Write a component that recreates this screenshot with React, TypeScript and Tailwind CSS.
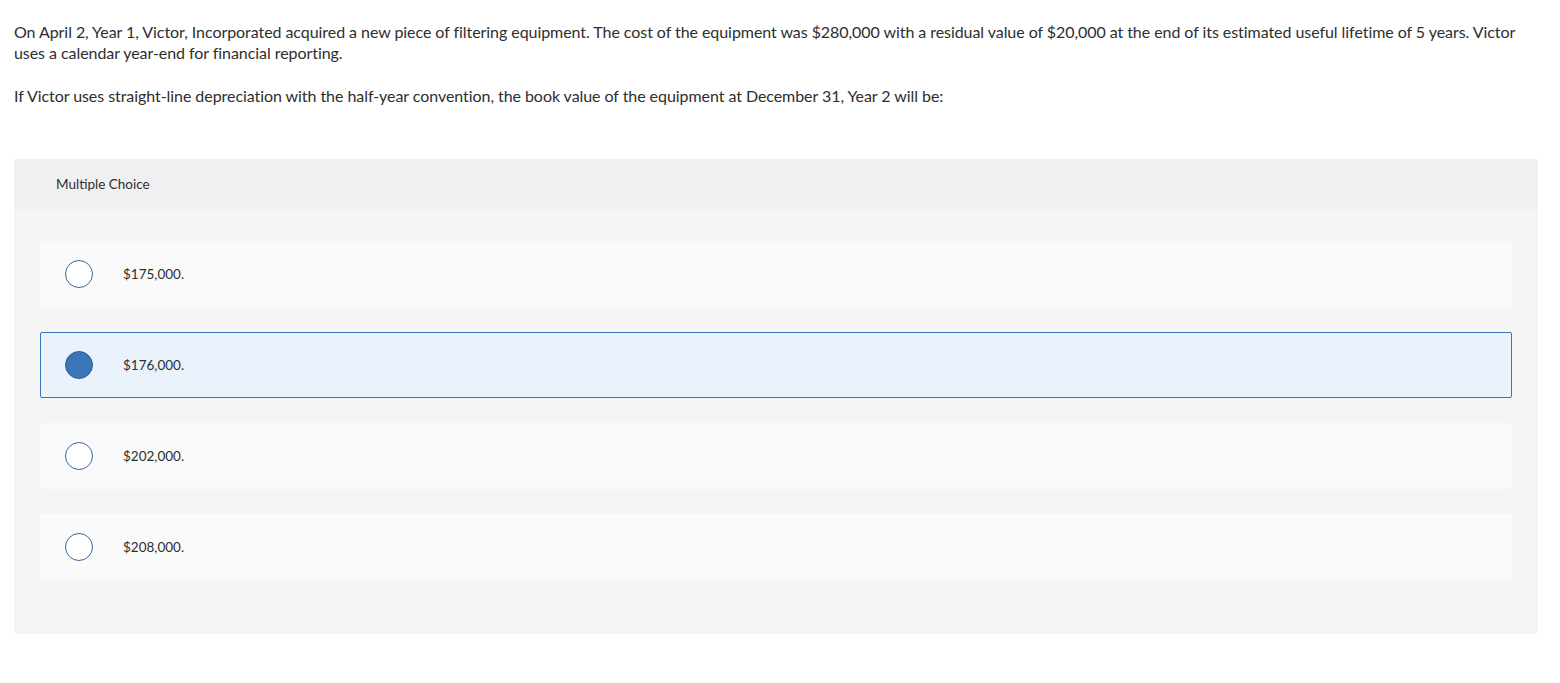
import React from "react";

const options = [
  { label: "$175,000.", selected: false },
  { label: "$176,000.", selected: true },
  { label: "$202,000.", selected: false },
  { label: "$208,000.", selected: false },
];

export default function App() {
  return (
    <div
      className="min-h-[683px] w-[1560px] bg-white text-[#2e2e2e]"
      style={{ fontFamily: "Lato, 'Open Sans', sans-serif" }}
    >
      <div className="px-[14px] pt-[21px]">
        <p className="text-[16px] leading-[21px] tracking-[-0.06px] w-[1525px]">
          On April 2, Year 1, Victor, Incorporated acquired a new piece of filtering equipment. The cost of the equipment was $280,000 with a residual value of $20,000 at the end of its estimated useful lifetime of 5 years. Victor uses a calendar year-end for financial reporting.
        </p>
        <p className="mt-[22px] text-[16px] leading-[21px] tracking-[-0.06px]">
          If Victor uses straight-line depreciation with the half-year convention, the book value of the equipment at December 31, Year 2 will be:
        </p>
      </div>
      <div className="mx-[14px] mt-[53px] w-[1524px] rounded-[3px] bg-[#f5f5f5] overflow-hidden">
        <div className="h-[50px] bg-[#f0f0f0] flex items-center pl-[42px] text-[13.5px]">
          Multiple Choice
        </div>
        <div className="px-[26px] pt-[32px] pb-[54px] flex flex-col gap-[25px]">
          {options.map((o) => (
            <div
              key={o.label}
              className={
                o.selected
                  ? "h-[66px] flex items-center rounded-[2px] border border-[#3a78bd] bg-[#eaf2fb] pl-[24px]"
                  : "h-[66px] flex items-center rounded-[2px] border border-[#fafafa] bg-[#fafafa] pl-[24px]"
              }
            >
              <span
                className={
                  o.selected
                    ? "w-[28px] h-[28px] rounded-full bg-[#3a76b8] border border-[#2d5f95]"
                    : "w-[28px] h-[28px] rounded-full bg-white border-[1.5px] border-[#35689b]"
                }
              />
              <span className="ml-[30px] text-[13.5px]">{o.label}</span>
            </div>
          ))}
        </div>
      </div>
    </div>
  );
}
